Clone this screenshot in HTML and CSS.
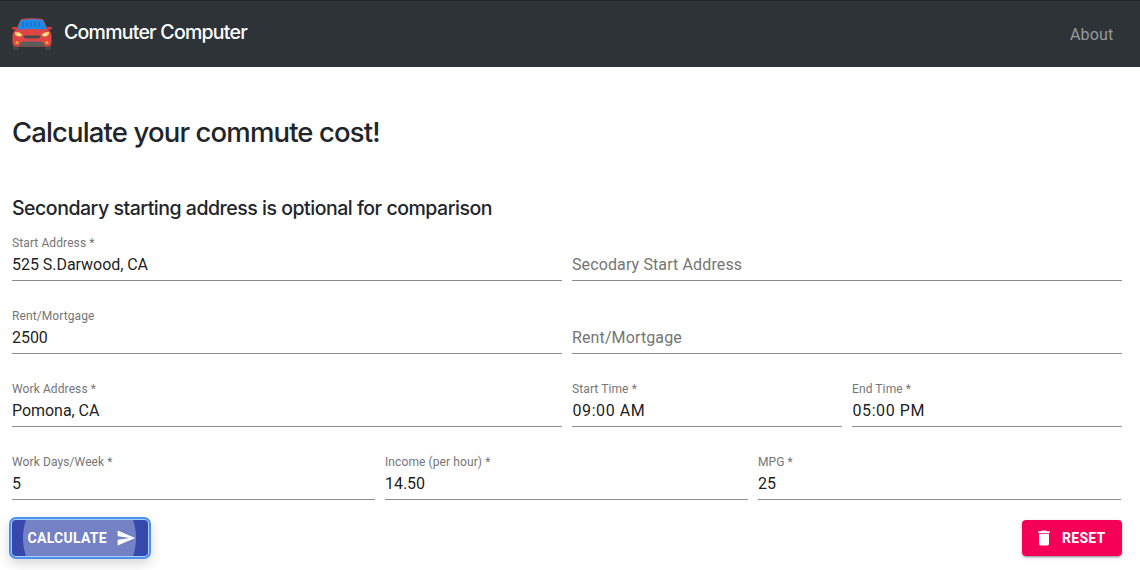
FILE: index.html
```html
<!DOCTYPE html>
<html lang="en">
<head>
<meta charset="utf-8">
<title>Commuter Computer</title>
<link rel="stylesheet" href="styles.css">
</head>
<body>
<nav class="navbar">
  <a class="brand">
    <svg class="car" width="42" height="42" viewBox="0 0 42 42">
      <path fill="#454545" d="M2 28h6v8q0 1-1 1H3q-1 0-1-1zM34 28h6v8q0 1-1 1h-4q-1 0-1-1z"/>
      <rect x="1" y="14" width="5" height="2.500" rx="1.200" fill="#e53935"/>
      <rect x="36" y="14" width="5" height="2.500" rx="1.200" fill="#e53935"/>
      <path fill="#e04444" d="M11 6q10-1.500 20 0 1.500.4 2 2l3.500 8q4 2.500 4 7v7q0 2-3 3.500H4.500q-3-1.500-3-3.500v-7q0-4.500 4-7L9 8q.5-1.600 2-2z"/>
      <path fill="#1e88e5" d="M11 7q10-1.500 20 0 1.300.4 1.700 1.600l3.100 8q-14.800-1.400-29.600 0l3.100-8Q9.700 7.400 11 7z"/>
      <path fill="#1976d2" d="M11 9h2v5h-2zm4 0h2v5h-2zm4 0h2v5h-2zm4 0h2v5h-2zm4 0h2v5h-2z"/>
      <path fill="#4a4a4a" d="M12.500 22.500h17q0 3-3 3h-11q-3 0-3-3z"/>
      <path fill="#5d5d5d" d="M10 29q11-1.500 22 0l2 4q-13 1-26 0z"/>
      <path fill="#ffca62" d="M4 19q5-.5 7.500 3Q10 24.500 6 23 3.500 22 4 19zM38 19q-5-.5-7.500 3 1.500 2.500 5.500 1 2.500-1 2-4z"/>
      <circle cx="8" cy="21.500" r="1.200" fill="#fff3d0"/><circle cx="34" cy="21.500" r="1.200" fill="#fff3d0"/>
      <circle cx="6" cy="29.500" r="1.600" fill="#ffa726"/><circle cx="36" cy="29.500" r="1.600" fill="#ffa726"/>
    </svg>
    <span class="brand-name">Commuter Computer</span>
  </a>
  <a class="nav-link">About</a>
</nav>
<main class="content">
  <h3 class="title">Calculate your commute cost!</h3>
  <h5 class="subtitle">Secondary starting address is optional for comparison</h5>
  <form class="form">
    <div class="row halves">
      <label class="field"><span class="label">Start Address *</span><input class="input" value="525 S.Darwood, CA"></label>
      <label class="field"><span class="label"></span><input class="input" placeholder="Secodary Start Address"></label>
    </div>
    <div class="row halves">
      <label class="field"><span class="label">Rent/Mortgage</span><input class="input" value="2500"></label>
      <label class="field"><span class="label"></span><input class="input" placeholder="Rent/Mortgage"></label>
    </div>
    <div class="row work">
      <label class="field"><span class="label">Work Address *</span><input class="input" value="Pomona, CA"></label>
      <label class="field"><span class="label">Start Time *</span><input class="input time" value="09:00 AM"></label>
      <label class="field"><span class="label">End Time *</span><input class="input time" value="05:00 PM"></label>
    </div>
    <div class="row thirds">
      <label class="field"><span class="label">Work Days/Week *</span><input class="input" value="5"></label>
      <label class="field"><span class="label">Income (per hour) *</span><input class="input" value="14.50"></label>
      <label class="field"><span class="label">MPG *</span><input class="input" value="25"></label>
    </div>
    <div class="actions">
      <button type="button" class="button calculate">Calculate
        <svg class="icon" width="20" height="20" viewBox="0 0 24 24"><path fill="currentColor" d="M2.010 21L23 12 2.010 3 2 10l15 2-15 2z"/></svg>
      </button>
      <button type="button" class="button reset">
        <svg class="icon" width="20" height="20" viewBox="0 0 24 24"><path fill="currentColor" d="M6 19c0 1.100.9 2 2 2h8c1.100 0 2-.9 2-2V7H6v12zM19 4h-3.500l-1-1h-5l-1 1H5v2h14V4z"/></svg>
        Reset
      </button>
    </div>
  </form>
</main>
</body>
</html>
```
FILE: styles.css
```css
* { box-sizing: border-box; }
body {
  margin: 0;
  min-height: 570px;
  background: #fff;
  color: #212529;
  font-family: Inter, "Liberation Sans", sans-serif;
}
.navbar {
  display: flex;
  align-items: center;
  justify-content: space-between;
  height: 67px;
  padding: 0 26.5px 0 11px;
  background: #2e3338;
  border-top: 1px solid #212428;
}
.brand { display: flex; align-items: center; gap: 11px; color: #fff; }
.car { margin-top: -1px; }
.brand-name {
  font-size: 19.5px;
  line-height: 30px;
  font-weight: 450;
  letter-spacing: -0.75px;
  padding-bottom: 4px;
}
.nav-link {
  font-family: Roboto, sans-serif;
  font-size: 16px;
  letter-spacing: 0.2px;
  color: #979a9c;
}
.content { padding: 48px 18px 0 12px; }
.title {
  margin: 0;
  font-size: 27.5px;
  line-height: 35px;
  font-weight: 500;
  letter-spacing: -0.87px;
}
.subtitle {
  margin: 46px 0 13px;
  font-size: 19.5px;
  line-height: 24px;
  font-weight: 550;
  letter-spacing: -0.48px;
}
.form { font-family: Roboto, sans-serif; }
.row { display: grid; gap: 10px; margin-bottom: 25px; }
.halves { grid-template-columns: 1fr 1fr; }
.work { grid-template-columns: 550px 270px 270px; }
.thirds { grid-template-columns: repeat(3, 363px); margin-bottom: 20px; }
.field { display: flex; flex-direction: column; height: 48px; border-bottom: 1px solid #8c8c8c; }
.label {
  height: 16px;
  padding-top: 3px;
  font-size: 12px;
  line-height: 14px;
  letter-spacing: 0.1px;
  color: #757575;
}
.input {
  width: 100%;
  height: 31px;
  padding: 0;
  border: 0;
  outline: 0;
  background: transparent;
  color: rgba(0, 0, 0, 0.9);
  font: 16px/19px Roboto, sans-serif;
  letter-spacing: -0.04px;
}
.input::placeholder { color: #757575; opacity: 1; letter-spacing: 0.12px; }
.time { letter-spacing: 0.58px; padding-left: 0.5px; }
.actions { display: flex; justify-content: space-between; }
.button {
  display: flex;
  align-items: center;
  height: 36px;
  padding: 0;
  border: 0;
  border-radius: 4px;
  color: #fff;
  font: 700 14px/24px Roboto, sans-serif;
  letter-spacing: 0.28px;
  text-transform: uppercase;
}
.calculate {
  width: 136px;
  padding-left: 15.5px;
  gap: 9px;
  background: radial-gradient(circle 57px at 67.5px 18px, #7481c5 56px, #3648ac 57px);
  box-shadow: 0 0 0 1px #a9d0fb, 0 0 0 3px #4d90f0, 0 5px 12px 3px rgba(0, 0, 0, 0.16);
}
.reset {
  width: 100px;
  padding-left: 12px;
  gap: 8px;
  background: #f50057;
  box-shadow: 0 3px 1px -2px rgba(0, 0, 0, 0.2), 0 2px 2px rgba(0, 0, 0, 0.14), 0 1px 5px rgba(0, 0, 0, 0.12);
}
.icon { flex: none; }
```
